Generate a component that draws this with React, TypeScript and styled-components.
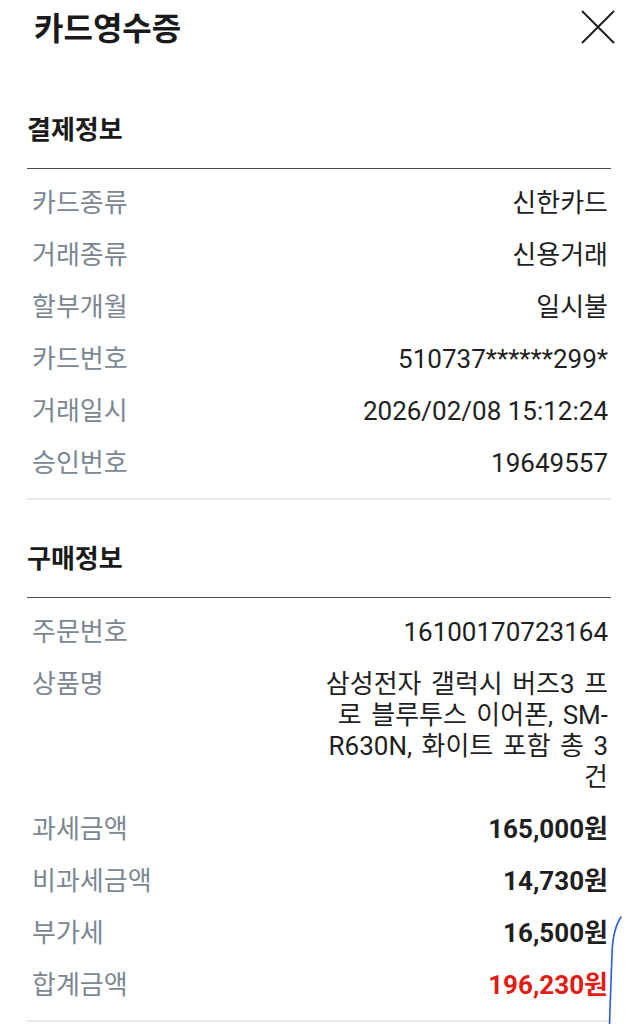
import styled, { createGlobalStyle } from 'styled-components';

const GlobalStyle = createGlobalStyle`
  html, body {
    margin: 0;
    padding: 0;
    background: #ffffff;
  }
  body {
    font-family: Roboto, "Noto Sans CJK KR", sans-serif;
    color: #1f1f1f;
  }
`;

const Page = styled.div`
  position: relative;
  width: 638px;
  min-height: 1024px;
  box-sizing: border-box;
  padding: 0 27px;
  overflow: hidden;
`;

const Header = styled.header`
  height: 71px;
  display: flex;
  justify-content: space-between;
  align-items: flex-start;
  padding: 9px 0 0 7px;
  margin-right: -4px;
  box-sizing: border-box;
`;

const Title = styled.h1`
  margin: 0;
  font-size: 32px;
  line-height: 40px;
  font-weight: 700;
  color: #1a1a1a;
`;

const CloseButton = styled.button`
  width: 34px;
  height: 34px;
  margin-top: 1px;
  padding: 0;
  border: none;
  background: none;
  display: flex;
  cursor: pointer;
`;

const Section = styled.section`
  display: flex;
  flex-direction: column;
`;

const SectionTitle = styled.h2`
  margin: 0;
  padding: 39px 0 18px;
  font-size: 26px;
  line-height: 40px;
  font-weight: 700;
  color: #1a1a1a;
  border-bottom: 1.5px solid #4a4a4a;
`;

const RowList = styled.dl`
  margin: 0;
  padding: 8px 0 9px;
  border-bottom: 2px solid #e6eaec;
`;

const Row = styled.div`
  display: flex;
  justify-content: space-between;
  align-items: flex-start;
  padding: 10.5px 3px 10.5px 5px;
  font-size: 26px;
  line-height: 31px;
`;

const Label = styled.dt`
  margin: 0;
  color: #7b8792;
  white-space: nowrap;
`;

const Value = styled.dd<{ $wrap?: boolean; $bold?: boolean; $accent?: boolean }>`
  margin: 0;
  max-width: 283px;
  text-align: right;
  color: ${p => (p.$accent ? '#e31b12' : '#1f1f1f')};
  font-weight: ${p => (p.$bold ? 700 : 400)};
  word-spacing: ${p => (p.$wrap ? '3px' : '0')};
  word-break: ${p => (p.$wrap ? 'break-all' : 'normal')};
`;

const PenMark = styled.svg`
  position: absolute;
  left: 600px;
  top: 910px;
  width: 30px;
  height: 114px;
  pointer-events: none;
`;

interface Item {
  label: string;
  value: string;
  wrap?: boolean;
  bold?: boolean;
  accent?: boolean;
}

const payment: Item[] = [
  { label: '카드종류', value: '신한카드' },
  { label: '거래종류', value: '신용거래' },
  { label: '할부개월', value: '일시불' },
  { label: '카드번호', value: '510737******299*' },
  { label: '거래일시', value: '2026/02/08 15:12:24' },
  { label: '승인번호', value: '19649557' },
];

const purchase: Item[] = [
  { label: '주문번호', value: '16100170723164' },
  { label: '상품명', value: '삼성전자 갤럭시 버즈3 프로 블루투스 이어폰, SM-R630N, 화이트 포함 총 3건', wrap: true },
  { label: '과세금액', value: '165,000원', bold: true },
  { label: '비과세금액', value: '14,730원', bold: true },
  { label: '부가세', value: '16,500원', bold: true },
  { label: '합계금액', value: '196,230원', bold: true, accent: true },
];

function InfoSection({ title, items }: { title: string; items: Item[] }) {
  return (
    <Section>
      <SectionTitle>{title}</SectionTitle>
      <RowList>
        {items.map(item => (
          <Row key={item.label}>
            <Label>{item.label}</Label>
            <Value $wrap={item.wrap} $bold={item.bold} $accent={item.accent}>
              {item.value}
            </Value>
          </Row>
        ))}
      </RowList>
    </Section>
  );
}

export default function App() {
  return (
    <Page>
      <GlobalStyle />
      <Header>
        <Title>카드영수증</Title>
        <CloseButton aria-label="닫기">
          <svg width="34" height="34" viewBox="0 0 34 34">
            <path d="M1 1 L33 33 M33 1 L1 33" stroke="#1f1f1f" strokeWidth="2" fill="none" />
          </svg>
        </CloseButton>
      </Header>
      <InfoSection title="결제정보" items={payment} />
      <InfoSection title="구매정보" items={purchase} />
      <PenMark viewBox="0 0 30 114">
        <path d="M21 7 C15 16, 12.5 26, 12 44 L9.5 114" stroke="#2a5bd7" strokeWidth="1.6" fill="none" strokeLinecap="round" />
      </PenMark>
    </Page>
  );
}
